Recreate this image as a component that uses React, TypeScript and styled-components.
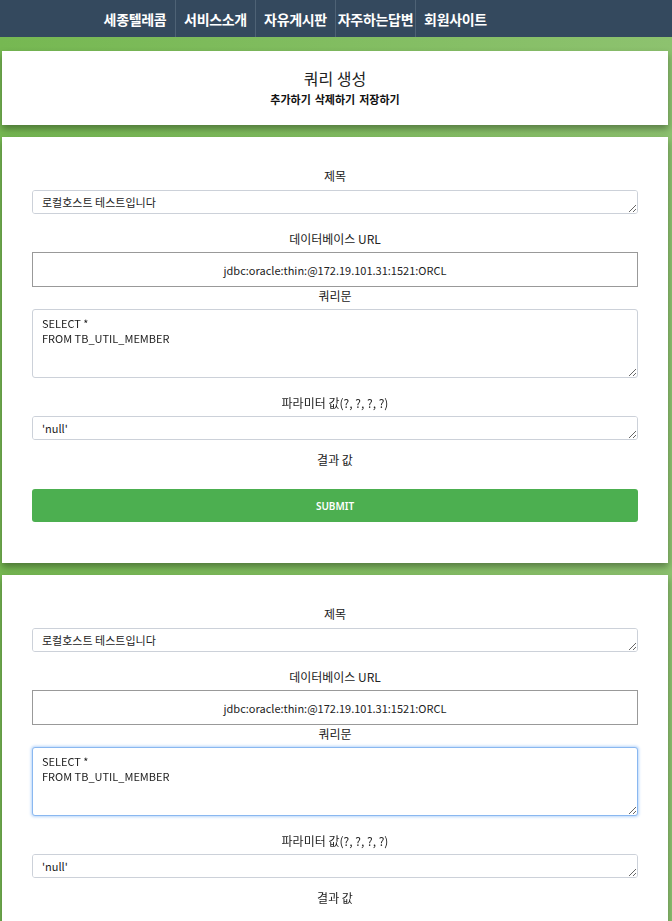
import React, { useEffect, useRef } from "react";
import styled, { createGlobalStyle, css } from "styled-components";

const GlobalStyle = createGlobalStyle`
  html, body { margin: 0; padding: 0; }
  body {
    background: linear-gradient(to right, #76b852, #8dc26f);
    background-color: #76b852;
    font-family: "Noto Sans CJK KR", "Noto Sans", sans-serif;
    min-height: 921px;
  }
  * { box-sizing: border-box; }
`;

const NavBar = styled.nav`
  height: 37px;
  background: #34495e;
  display: flex;
  padding-left: 95px;
`;

const NavItem = styled.a<{ $first?: boolean }>`
  width: 80px;
  height: 37px;
  display: flex;
  align-items: center;
  justify-content: center;
  color: #ffffff;
  font-weight: 700;
  font-size: 14px;
  white-space: nowrap;
  text-decoration: none;
  border-left: ${(p) => (p.$first ? "none" : "1px solid #4e6275")};
  letter-spacing: -0.3px;
`;

const Main = styled.main`
  padding: 14px 4px 0 2px;
  display: flex;
  flex-direction: column;
  gap: 12px;
`;

const Card = styled.section`
  background: #ffffff;
  box-shadow: 0 4px 7px rgba(0, 0, 0, 0.35);
`;

const HeaderCard = styled(Card)`
  height: 74px;
  display: flex;
  flex-direction: column;
  align-items: center;
  padding-top: 16px;
`;

const Title = styled.h2`
  margin: 0;
  font-size: 16px;
  font-weight: 400;
  color: #222;
  line-height: 22px;
`;

const Actions = styled.div`
  display: flex;
  gap: 4px;
  margin-top: 2px;
`;

const ActionLink = styled.span`
  font-size: 11px;
  font-weight: 700;
  color: #111;
  line-height: 16px;
`;

const FormCard = styled(Card)`
  padding: 30px 30px 41px;
  display: flex;
  flex-direction: column;
`;

const Label = styled.div<{ $gap?: number; $below?: number }>`
  text-align: center;
  font-size: 12px;
  line-height: 18px;
  color: #222;
  margin-top: ${(p) => p.$gap ?? 0}px;
  margin-bottom: ${(p) => p.$below ?? 4}px;
`;

const Field = styled.textarea<{ $h: number; $focused?: boolean; $padTop?: number }>`
  display: block;
  width: 100%;
  height: ${(p) => p.$h}px;
  padding: ${(p) => p.$padTop ?? 4}px 9px 4px;
  font-family: "Noto Sans CJK KR", "Noto Sans", sans-serif;
  font-size: 11px;
  line-height: 15px;
  color: #222;
  border: 1px solid #ccd1d9;
  border-radius: 3px;
  background: #fff;
  resize: vertical;
  outline: none;
  caret-color: #000;
  ${(p) =>
    p.$focused &&
    css`
      border-color: #8ab8f0;
      box-shadow: 0 0 3px 1px #b9d6fa;
    `}
  &:focus {
    border-color: #8ab8f0;
    box-shadow: 0 0 3px 1px #b9d6fa;
  }
`;

const UrlBox = styled.div`
  height: 35px;
  border: 1px solid #999;
  display: flex;
  align-items: center;
  justify-content: center;
  font-size: 11px;
  color: #222;
`;

const SubmitButton = styled.button`
  margin-top: 16px;
  height: 33px;
  width: 100%;
  border: 0;
  border-radius: 3px;
  background: #4caf50;
  color: #fff;
  font-family: "Noto Sans", "Noto Sans CJK KR", sans-serif;
  font-size: 10px;
  font-weight: 600;
  text-transform: uppercase;
`;

const navItems = ["세종텔레콤", "서비스소개", "자유게시판", "자주하는답변", "회원사이트"];

const QUERY = "SELECT *\nFROM TB_UTIL_MEMBER";

function QueryForm({ focused }: { focused?: boolean }) {
  const ref = useRef<HTMLTextAreaElement>(null);
  useEffect(() => {
    if (focused && ref.current) {
      const el = ref.current;
      el.focus({ preventScroll: true });
      el.setSelectionRange(el.value.length, el.value.length);
    }
  }, [focused]);
  return (
    <FormCard>
      <Label $below={5}>제목</Label>
      <Field $h={24} defaultValue="로컬호스트 테스트입니다" />
      <Label $gap={16}>데이터베이스 URL</Label>
      <UrlBox>jdbc:oracle:thin:@172.19.101.31:1521:ORCL</UrlBox>
      <Label>쿼리문</Label>
      <Field ref={ref} $h={69} $padTop={6} $focused={focused} defaultValue={QUERY} />
      <Label $gap={16}>파라미터 값(?, ?, ?, ?)</Label>
      <Field $h={24} defaultValue="'null'" />
      <Label $gap={11}>결과 값</Label>
      <SubmitButton>Submit</SubmitButton>
    </FormCard>
  );
}

export default function App() {
  return (
    <>
      <GlobalStyle />
      <NavBar>
        {navItems.map((n, i) => (
          <NavItem key={n} $first={i === 0}>
            {n}
          </NavItem>
        ))}
      </NavBar>
      <Main>
        <HeaderCard>
          <Title>쿼리 생성</Title>
          <Actions>
            <ActionLink>추가하기</ActionLink>
            <ActionLink>삭제하기</ActionLink>
            <ActionLink>저장하기</ActionLink>
          </Actions>
        </HeaderCard>
        <QueryForm />
        <QueryForm focused />
      </Main>
    </>
  );
}
